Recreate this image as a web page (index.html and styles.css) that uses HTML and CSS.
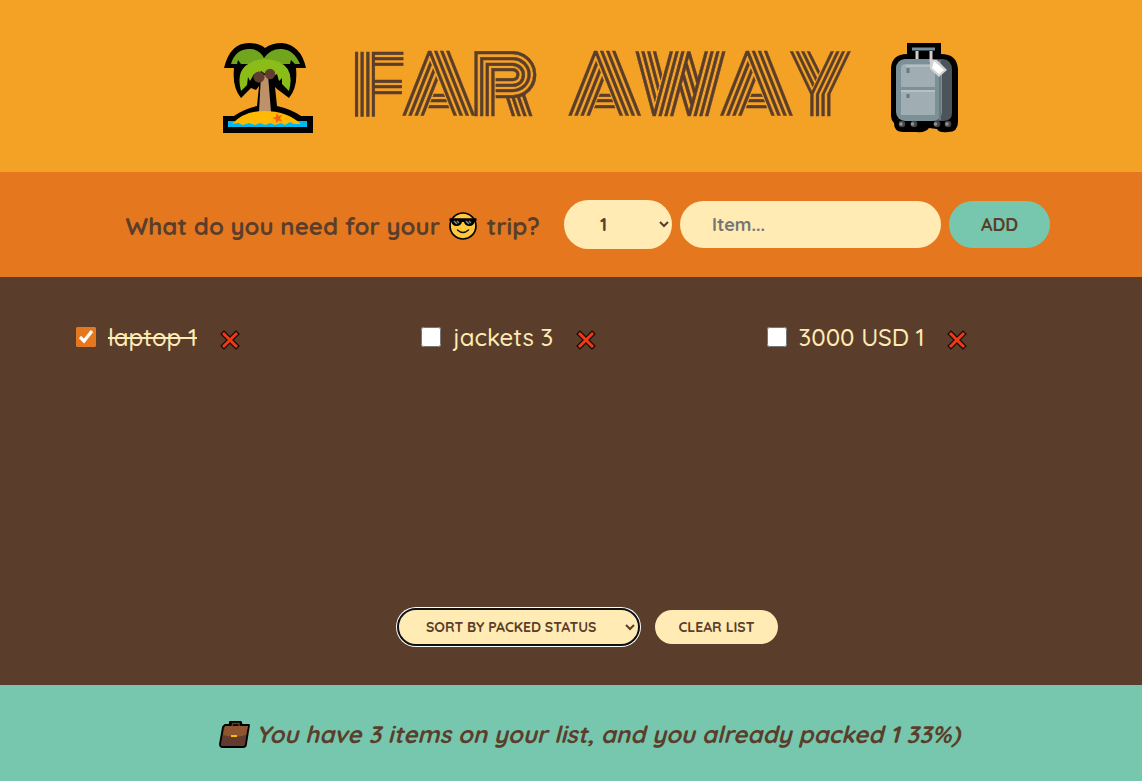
FILE: index.html
```html
<!DOCTYPE html>
<html lang="en">
<head>
<meta charset="utf-8">
<title>Far Away</title>
<link rel="stylesheet" href="styles.css">
</head>
<body>
<svg class="defs" width="0" height="0" aria-hidden="true">
  <symbol id="cross" viewBox="0 0 20 20"><path d="M4 4 16 16M16 4 4 16" stroke="#160b07" stroke-width="5.400" stroke-linecap="square" stroke-linejoin="round"/><path d="M4 4 16 16M16 4 4 16" stroke="#f03a17" stroke-width="3" stroke-linecap="square"/></symbol>
</svg>
<div class="app">
  <header class="header">
    <svg class="palm" viewBox="0 0 92 92" aria-hidden="true">
      <path fill="#000" d="M1 74H12Q22 67 35 64L37 44 34 48 29 46 19 56Q10 45 12 26H2Q8 1 27 1 37 1 43 6 50 1 60 1 79 3 84 26H74Q76 45 67 56L55 47 53 45 55 64Q69 67 79 74H91V91H1Z"/>
      <path fill="#72a51e" d="M9 22Q13 8 26 7 37 6 42 16 49 6 60 7 72 8 78 22L73 22 69 18 68 22H19L16 18 15 22Z"/>
      <path fill="#8bbd19" d="M19 49Q13 27 30 20 42 14 57 20 73 27 67 49L60 42V36L57 39 55 32 50 35 48 29 45 33 39 29 36 34 32 32 28 39 26 35 25 43Z"/>
      <path fill="#bd9268" d="M39 33H46L49 70H37Z"/><circle cx="37" cy="35" r="5.600" fill="#603d30"/><circle cx="48" cy="32" r="5.200" fill="#603d30"/>
      <path fill="#00b9f1" d="M6 79H85V85H6Z"/><path fill="#ffb900" d="M10 82Q22 69 42 69 65 69 79 82L72 82 68 80 63 83 59 81 53 83 48 81 43 83 38 81 33 83 27 81 21 83 16 81Z"/>
      <path fill="#f7630c" d="m55 71 1.500 3 3.500-1-2 3.300 2 3.200-3.500-1-2.500 2.500-.2-3.500-3.600-1.500 3.600-1Z"/>
    </svg>
    <h1 class="title">FAR AWAY</h1>
    <svg class="bag" viewBox="0 0 70 92" aria-hidden="true">
      <path fill="#000" d="M18 1H52V12Q68 12 69 27V80Q69 90 59 90 50 91 48 87L40 86Q37 91 27 90H16Q5 91 5 81 2 78 2 74V26Q3 12 18 12Z"/>
      <path fill="#4b545b" d="M40 17H54Q63 18 63 28V71Q63 79 54 79H40Z"/><rect x="7" y="17" width="46" height="62" rx="9" fill="#7c9098"/><path d="M51 18V78" stroke="#69797e" stroke-width="2"/>
      <path fill="#a0adb2" d="M12 26Q12 22 17 22H46V45H12ZM12 48H46V73H12Z"/><path d="M12 49H46M17 24H46" stroke="#b5c0c5" stroke-width="2"/>
      <path d="M19 26V31M19 52V56" stroke="#68797f" stroke-width="3"/><path d="M23 7H46" stroke="#78909c" stroke-width="3"/><path d="M28 9V17M42 9V20" stroke="#cfcfcf" stroke-width="3"/>
      <path fill="#d2d2d2" d="M41 18H48L58 28 50 35 41 27Z"/><path fill="#fff" d="M45 19 55 28 50 32 43 26Z"/>
      <g fill="#454545"><circle cx="13" cy="82" r="3.300"/><circle cx="25" cy="82" r="3.300"/><circle cx="48" cy="82" r="3.300"/><circle cx="59" cy="82" r="3.300"/></g><g fill="#929292"><circle cx="12" cy="82" r="1.800"/><circle cx="23.500" cy="82" r="1.800"/><circle cx="46.500" cy="82" r="1.800"/><circle cx="58" cy="82" r="1.800"/></g>
    </svg>
  </header>
  <form class="add-form">
    <h3 class="question"><span class="ask">What do you need for your</span>
      <svg class="cool" viewBox="0 0 30 30" aria-hidden="true"><circle cx="15" cy="15" r="13" fill="#ffc83d" stroke="#000" stroke-width="1.700"/><path d="M1.500 7.300H28.500V10L26.500 10.500Q26 15 21.500 15 17 15 16 11H14Q13 15 8.500 15 4 15 3.500 10.500L1.500 10Z" fill="#000"/><path d="m6 10 3 3M9 10l2 2m7-2 3 3m0-3 2 2" stroke="#888" stroke-width="1.500"/><path d="M9.500 19Q15 24 20.500 19" fill="none" stroke="#111" stroke-width="1.500" stroke-linecap="round"/></svg>
      <span class="trip">trip?</span></h3>
    <select class="pill quantity"><option>1</option></select>
    <input class="pill item-name" type="text" placeholder="Item...">
    <button class="pill add" type="button">ADD</button>
  </form>
  <main class="list">
    <ul class="items">
      <li class="item"><input class="check" type="checkbox" checked><span class="label packed laptop">laptop 1</span><svg class="remove"><use href="#cross"/></svg></li>
      <li class="item"><input class="check" type="checkbox"><span class="label jackets">jackets 3</span><svg class="remove"><use href="#cross"/></svg></li>
      <li class="item"><input class="check" type="checkbox"><span class="label money">3000 USD 1</span><svg class="remove"><use href="#cross"/></svg></li>
    </ul>
    <div class="actions">
      <select class="pill sort"><option>SORT BY PACKED STATUS</option></select>
      <button class="pill clear" type="button">CLEAR LIST</button>
    </div>
  </main>
  <footer class="stats">
    <svg class="briefcase" viewBox="0 0 32 28" aria-hidden="true"><path d="M11 6 12 2H21L22 5" fill="none" stroke="#000" stroke-width="4"/><path d="M6 4H30L27 23Q27 26 24 26H3Q1 26 1 23L4 6Z" fill="#623b2e" stroke="#000" stroke-width="1.800" stroke-linejoin="round"/><path d="M6 5H29L27 14Q16 17 4 14Z" fill="#8e562e"/><path d="M13 5 14 2.500H20L20 5" fill="none" stroke="#623b2e" stroke-width="1.500"/><path d="M12 15H18" stroke="#ffb900" stroke-width="2"/></svg>
    <em class="summary">You have 3 items on your list, and you already packed 1 33%)</em>
  </footer>
</div>
</body>
</html>
```
FILE: styles.css
```css
* { box-sizing: border-box; margin: 0; padding: 0; }
body { font-family: Quicksand, Lato, sans-serif; font-weight: 500; color: #5a3e2b; }
.defs { display: block; }
.app { height: 781px; display: grid; grid-template-rows: 172px 105px 1fr 96px; overflow: hidden; }
.header { display: flex; background: #f4a226; padding: 42px 0 0 222px; }
.palm { width: 92px; height: 92px; flex: none; }
.title { width: 508px; height: 90px; line-height: 90px; margin: -1px 29.5px 0 37.5px; flex: none; font-family: Monoton, Lato, sans-serif; font-size: 80px; font-weight: 400; letter-spacing: -5px; word-spacing: 30px; white-space: nowrap; -webkit-text-stroke: .4px #5a3e2b; }
.bag { width: 70px; height: 92px; flex: none; }
.add-form { display: flex; align-items: center; gap: 8px; padding-left: 126px; background: #e5771f; }
.question { display: flex; align-items: center; width: 414px; margin-right: 16px; padding-top: 3px; font-size: 24px; font-weight: 700; white-space: nowrap; }
.ask { width: 323px; margin-left: -.5px; }
.cool { width: 30px; height: 30px; margin-right: 8.5px; }
.pill { border: 0; border-radius: 100px; background: #ffebb3; color: #5a3e2b; font-family: inherit; font-weight: 700; }
.quantity { width: 108px; height: 49px; padding: 12px 32px; font-size: 18px; }
.item-name { width: 261px; height: 47px; padding: 12px 32px; font-size: 18px; }
.add { width: 101px; height: 47px; font-size: 18px; background: #76c7ad; }
.list { display: flex; flex-direction: column; justify-content: space-between; background: #5a3e2b; padding: 45px 30px 41px 76px; }
.items { list-style: none; display: grid; grid-template-columns: repeat(3, 345.3px); }
.item { display: flex; align-items: center; color: #ffebb3; height: 30px; }
.check { width: 20px; height: 20px; margin-right: 12px; accent-color: #e5771f; }
.label { font-size: 24px; white-space: nowrap; }
.packed { text-decoration: line-through; }
.laptop { width: 89px; }
.jackets { width: 100px; }
.money { width: 126px; }
.remove { width: 20px; height: 20px; margin: 5px 0 0 22.5px; }
.actions { display: flex; align-items: center; gap: 17px; padding-left: 323px; }
.sort { width: 239px; height: 34px; padding: 0 23px; font-size: 14px; outline: 2px solid #101010; outline-offset: 0; box-shadow: 0 0 0 3px #fff; }
.clear { width: 123px; height: 34px; font-size: 14px; }
.stats { display: flex; align-items: center; padding: 2px 0 0 219px; background: #76c7ad; }
.briefcase { width: 32px; height: 28px; margin-right: 5px; margin-top: 2px; }
.summary { font-size: 24px; font-weight: 700; white-space: nowrap; }
```
